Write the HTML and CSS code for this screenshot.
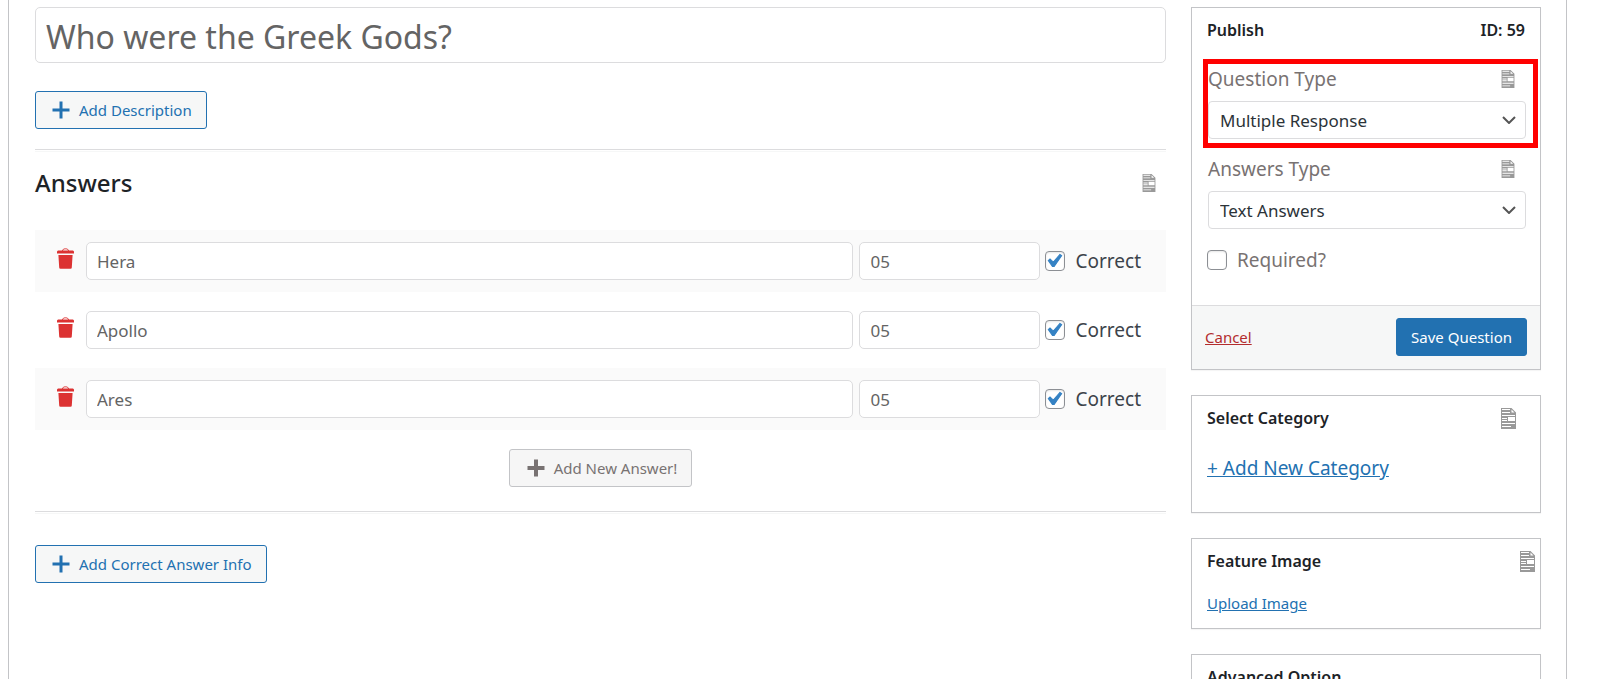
FILE: index.html
```html
<!DOCTYPE html>
<html lang="en">
<head>
    <meta charset="UTF-8">
    <meta name="viewport" content="width=device-width, initial-scale=1.0">
    <title>Edit Question</title>
    <link rel="stylesheet" href="styles.css">
</head>
<body>
    <svg class="sprite" aria-hidden="true">
        <symbol id="icon-doc" viewBox="0 0 15 21">
            <path fill="#999" fill-rule="evenodd" d="M0 0h10.500L15 4.500V21H0zM1 1v1h8V1zM1 4v1h8V4zM10.500 1.500V4.500h3zM1 7v1h13V7zM1 10v1h5v-1zM7 9v4h7V9zM1 12v1h5v-1zM1 15v1h13v-1zM1 18v1h9v-1z"/>
        </symbol>
        <symbol id="icon-trash" viewBox="0 0 17 21">
            <path fill="none" stroke="#dc3232" d="M5.500 3C5.500 1.300 7 .8 8.500 .8s3 .5 3 2.200"/>
            <path fill="#dc3232" d="M1 2.500h15l1 1v2H0v-2zM1.400 7h14.200L14.800 19.500q0 1.300-1.300 1.300h-10q-1.300 0-1.300-1.300z"/>
        </symbol>
        <symbol id="icon-plus" viewBox="0 0 18 18">
            <path fill="none" stroke="currentColor" d="M9 0.500v17M0.500 9h17"/>
        </symbol>
    </svg>

    <div class="panel">
        <div class="main">
            <input type="text" class="title" aria-label="Question title" value="Who were the Greek Gods?">
            <button type="button" class="btn btn-outline"><svg class="plus"><use href="#icon-plus"/></svg>Add Description</button>
            <hr class="line">

            <div class="answers-head">
                <h2>Answers</h2>
                <svg class="doc"><use href="#icon-doc"/></svg>
            </div>

            <div class="answers">
                <div class="answer">
                    <button type="button" class="delete" aria-label="Delete Hera"><svg class="trash"><use href="#icon-trash"/></svg></button>
                    <input type="text" class="field text" aria-label="Answer 1" value="Hera">
                    <input type="text" class="field points" aria-label="Points 1" value="05">
                    <label class="check"><input type="checkbox" checked>Correct</label>
                </div>
                <div class="answer">
                    <button type="button" class="delete" aria-label="Delete Apollo"><svg class="trash"><use href="#icon-trash"/></svg></button>
                    <input type="text" class="field text" aria-label="Answer 2" value="Apollo">
                    <input type="text" class="field points" aria-label="Points 2" value="05">
                    <label class="check"><input type="checkbox" checked>Correct</label>
                </div>
                <div class="answer">
                    <button type="button" class="delete" aria-label="Delete Ares"><svg class="trash"><use href="#icon-trash"/></svg></button>
                    <input type="text" class="field text" aria-label="Answer 3" value="Ares">
                    <input type="text" class="field points" aria-label="Points 3" value="05">
                    <label class="check"><input type="checkbox" checked>Correct</label>
                </div>
            </div>

            <div class="add-answer">
                <button type="button" class="btn btn-grey"><svg class="plus"><use href="#icon-plus"/></svg>Add New Answer!</button>
            </div>
            <hr class="line">
            <button type="button" class="btn btn-outline btn-info"><svg class="plus"><use href="#icon-plus"/></svg>Add Correct Answer Info</button>
        </div>

        <div class="sidebar">
            <div class="card">
                <div class="card-head">
                    <h3>Publish</h3>
                    <h3>ID: 59</h3>
                </div>
                <div class="option highlight">
                    <div class="option-head">
                        <label for="question-type">Question Type</label>
                        <svg class="doc"><use href="#icon-doc"/></svg>
                    </div>
                    <select id="question-type">
                        <option>Multiple Response</option>
                    </select>
                </div>
                <div class="option">
                    <div class="option-head">
                        <label for="answer-type">Answers Type</label>
                        <svg class="doc"><use href="#icon-doc"/></svg>
                    </div>
                    <select id="answer-type">
                        <option>Text Answers</option>
                    </select>
                </div>
                <label class="check required"><input type="checkbox">Required?</label>
                <div class="card-foot">
                    <a href="#" class="cancel">Cancel</a>
                    <button type="submit" class="btn btn-primary">Save Question</button>
                </div>
            </div>

            <div class="card category">
                <div class="card-head">
                    <h3>Select Category</h3>
                    <svg class="doc doc-large"><use href="#icon-doc"/></svg>
                </div>
                <a href="#" class="link-large">+ Add New Category</a>
            </div>

            <div class="card feature">
                <div class="card-head">
                    <h3>Feature Image</h3>
                    <svg class="doc doc-large"><use href="#icon-doc"/></svg>
                </div>
                <a href="#">Upload Image</a>
            </div>

            <div class="card">
                <div class="card-head">
                    <h3>Advanced Option</h3>
                </div>
            </div>
        </div>
    </div>
</body>
</html>
```

FILE: styles.css
```css
* {
    box-sizing: border-box;
}
body {
    margin: 0;
    height: 100vh;
    overflow: hidden;
    background-color: #fff;
    color: #3c434a;
    font-family: "Noto Sans", "Open Sans", sans-serif;
    font-size: 15px;
    line-height: 20px;
}
h2, h3 {
    margin: 0;
    color: #1d2327;
    font-weight: 500;
}
h2 {
    font-size: 24px;
    line-height: 32px;
}
h3 {
    font-size: 16px;
    font-weight: 600;
    line-height: 24px;
}
a {
    color: #2271b1;
}
input, select, button {
    font-family: inherit;
}
.sprite {
    display: none;
}
.panel {
    display: flex;
    gap: 25px;
    min-height: 100vh;
    margin: 0 32px 0 8px;
    padding: 7px 25px 0 26px;
    border-left: 1px solid #c3c4c7;
    border-right: 1px solid #c3c4c7;
}
.main {
    flex: 1;
    min-width: 0;
}
.title {
    display: block;
    width: 100%;
    height: 56px;
    margin-bottom: 28px;
    padding: 2px 10px 0;
    border: 1px solid #dcdcde;
    border-radius: 5px;
    color: #646464;
    font-size: 32px;
}
.line {
    height: 3px;
    margin: 20px 0 0;
    border: 0;
    border-top: 1px solid #dcdcde;
    border-bottom: 1px solid #f6f7f7;
}

/* buttons */
.btn {
    display: inline-flex;
    align-items: center;
    height: 38px;
    padding: 0 14px;
    border: 1px solid #2271b1;
    border-radius: 3px;
    font-size: 15px;
    cursor: pointer;
}
.btn-outline {
    padding-left: 16px;
    background-color: #f6f7f7;
    color: #2271b1;
}
.btn-info {
    margin-top: 31px;
}
.btn-grey {
    padding-left: 17px;
    border-color: #c3c4c7;
    background-color: #f6f6f6;
    color: #787272;
}
.btn-grey .plus {
    stroke-width: 4px;
}
.btn-primary {
    background-color: #2271b1;
    color: #fff;
}
.plus {
    width: 18px;
    height: 18px;
    margin-right: 9px;
    stroke-width: 3px;
}

/* answers */
.answers-head {
    display: flex;
    justify-content: space-between;
    align-items: center;
    margin: 15px 10px 31px 0;
}
.doc {
    width: 14px;
    height: 18px;
}
.doc-large {
    width: 15px;
    height: 21px;
}
.answers {
    display: grid;
    gap: 7px;
}
.answer {
    display: flex;
    align-items: center;
    height: 62px;
    padding: 0 25px 0 22px;
}
.answer:nth-child(odd) {
    background-color: #fafafa;
}
.delete {
    height: 38px;
    margin-right: 12px;
    padding: 0 0 6px;
    border: 0;
    background: none;
    cursor: pointer;
}
.trash {
    display: block;
    width: 17px;
    height: 21px;
}
.field {
    height: 38px;
    margin-right: 6px;
    padding: 1px 10px 0;
    border: 1px solid #dcdcde;
    border-radius: 5px;
    background-color: #fff;
    color: #646464;
    font-size: 17px;
}
.text {
    flex: 1;
    min-width: 0;
}
.points {
    width: 181px;
    margin-right: 5px;
}
.check {
    display: flex;
    align-items: center;
    gap: 10px;
    font-size: 19px;
    line-height: 26px;
}
.check input {
    appearance: none;
    width: 20px;
    height: 20px;
    margin: 0;
    border: 1px solid #8c8f94;
    border-radius: 4px;
    background-color: #fff;
    box-shadow: inset 0 1px 2px rgba(0, 0, 0, 0.1);
}
.check input:checked {
    background-image: url("data:image/svg+xml,%3Csvg xmlns='http://www.w3.org/2000/svg' viewBox='4 3 14 14'%3E%3Cpath fill='%233582c4' stroke='%233582c4' stroke-width='.8' d='M14.830 4.890l1.340.940-5.810 8.380H9.020L5.780 9.670l1.340-1.250 2.570 2.400z'/%3E%3C/svg%3E");
    background-position: center;
    background-repeat: no-repeat;
    background-size: 18px 18px;
}
.add-answer {
    display: flex;
    justify-content: center;
    margin: 19px 0 24px;
}
.add-answer + .line {
    margin-top: 0;
}

/* sidebar */
.sidebar {
    width: 350px;
}
.card {
    margin-bottom: 25px;
    border: 1px solid #c3c4c7;
    background-color: #fff;
    box-shadow: 0 1px 1px rgba(0, 0, 0, 0.04);
}
.card-head {
    display: flex;
    justify-content: space-between;
    align-items: center;
    padding: 10px 15px 1px;
}
.option {
    padding: 8px 14px 0 16px;
}
.option-head {
    display: flex;
    justify-content: space-between;
    align-items: center;
    margin-bottom: 9px;
    padding-right: 11px;
    color: #787272;
    font-size: 19px;
    line-height: 26px;
}
.option select {
    appearance: none;
    display: block;
    width: 100%;
    height: 38px;
    padding: 1px 11px 0;
    border: 1px solid #dcdcde;
    border-radius: 4px;
    background: #fff url("data:image/svg+xml,%3Csvg xmlns='http://www.w3.org/2000/svg' viewBox='0 0 14 8'%3E%3Cpath fill='none' stroke='%23555' stroke-width='2' d='M1 1l6 6 6-6'/%3E%3C/svg%3E") no-repeat right 9px center;
    background-size: 14px 8px;
    color: #2c3338;
    font-size: 17px;
}
.highlight {
    margin: 16px 2px 0 11px;
    padding: 2px 7px 4px 0;
    border: 5px solid #f00;
}
.required {
    margin: 18px 15px 32px;
    color: #787272;
}
.card-foot {
    display: flex;
    justify-content: space-between;
    align-items: center;
    padding: 12px 13px 13px;
    border-top: 1px solid #dcdcde;
    background-color: #f6f7f7;
}
.cancel {
    color: #b32d2e;
}
.category {
    padding-bottom: 31px;
}
.category .card-head {
    padding-right: 24px;
}
.link-large {
    display: block;
    width: fit-content;
    margin: 24px 15px 0;
    font-size: 19px;
    line-height: 26px;
}
.feature {
    padding-bottom: 15px;
}
.feature .card-head {
    padding-right: 5px;
    margin-bottom: 19px;
}
.feature a {
    margin-left: 15px;
}
```
